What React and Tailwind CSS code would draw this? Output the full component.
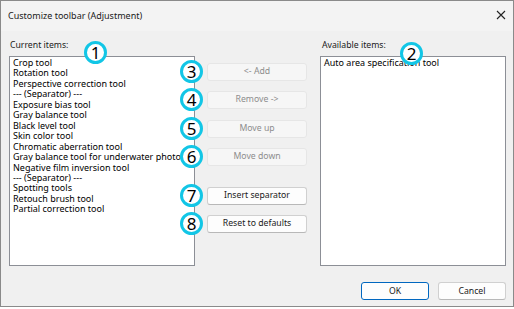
import React from "react";

const currentItems = [
  "Crop tool",
  "Rotation tool",
  "Perspective correction tool",
  "--- (Separator) ---",
  "Exposure bias tool",
  "Gray balance tool",
  "Black level tool",
  "Skin color tool",
  "Chromatic aberration tool",
  "Gray balance tool for underwater photo",
  "Negative film inversion tool",
  "--- (Separator) ---",
  "Spotting tools",
  "Retouch brush tool",
  "Partial correction tool",
];

const Badge = ({ n, className = "" }) => (
  <div
    className={`w-[23px] h-[23px] rounded-full border-[3px] border-[#12c6e6] bg-white flex items-center justify-center text-[17px] leading-none text-black ${className}`}
  >
    <span className="-mt-px">{n}</span>
  </div>
);

const SideButton = ({ n, label, disabled, className = "" }) => (
  <div className={`flex items-center gap-[4px] ${className}`}>
    <Badge n={n} />
    <button
      className={`w-[100px] h-[18px] rounded-[3px] border text-[8.7px] leading-none ${
        disabled
          ? "bg-[#f6f6f6] border-[#e6e6e6] text-[#8d8d8d]"
          : "bg-[#fdfdfd] border-[#d0d0d0] border-b-[#b8b8b8] text-[#1a1a1a]"
      }`}
    >
      {label}
    </button>
  </div>
);

export default function App() {
  return (
    <div
      className="w-[514px] h-[309px] bg-white"
      style={{ fontFamily: '"Noto Sans", "Open Sans", sans-serif' }}
    >
      <div className="w-[514px] h-[307px] border border-[#8a8a8a] bg-[#f0f0f0] flex flex-col">
        <div className="h-[30px] bg-[#f3f3f3] flex items-center justify-between pl-[7px] pr-[6px]">
          <span className="text-[9px] text-[#1a1a1a] -mt-[1px]">
            Customize toolbar (Adjustment)
          </span>
          <svg width="10" height="10" viewBox="0 0 10 10" className="mr-[1px] -mt-[3px]">
            <path d="M1 1 L9 9 M9 1 L1 9" stroke="#222" strokeWidth="1.1" />
          </svg>
        </div>

        <div className="relative flex-1 pl-[8px] pr-[7px] pt-[8px]">
          <div className="flex items-start">
            <div className="flex flex-col w-[186px]">
              <span className="pl-[1px] h-[17px] text-[8.7px] text-[#1a1a1a]">Current items:</span>
              <div className="h-[210px] bg-white border border-[#8c8f96] pl-[3px] pt-[1px]">
                {currentItems.map((t, i) => (
                  <div key={i} className="text-[9px] leading-[10.45px] text-black whitespace-nowrap">
                    {t}
                  </div>
                ))}
              </div>
            </div>

            <div className="flex flex-col ml-[-15px] pt-[21px]">
              <SideButton n={3} label="<- Add" disabled />
              <SideButton n={4} label="Remove ->" disabled className="mt-[5px]" />
              <SideButton n={5} label="Move up" disabled className="mt-[6px]" />
              <SideButton n={6} label="Move down" disabled className="mt-[5px]" />
              <SideButton n={7} label="Insert separator" className="mt-[16px]" />
              <SideButton n={8} label="Reset to defaults" className="mt-[5px]" />
            </div>

            <div className="flex flex-col w-[186px] ml-[13px]">
              <span className="pl-[2px] h-[17px] text-[8.7px] text-[#1a1a1a]">Available items:</span>
              <div className="h-[210px] bg-white border border-[#8c8f96] pl-[3px] pt-[1px]">
                <div className="text-[9px] leading-[10.45px] text-black whitespace-nowrap">
                  Auto area specification tool
                </div>
              </div>
            </div>
          </div>

          <div className="flex justify-end gap-[9px] mt-[16px]">
            <button className="w-[68px] h-[18px] rounded-[3px] border-[1.5px] border-[#0067c0] bg-[#fdfdfd] text-[8.7px] leading-none text-[#1a1a1a]">
              OK
            </button>
            <button className="w-[68px] h-[18px] rounded-[3px] border border-[#d0d0d0] border-b-[#b8b8b8] bg-[#fdfdfd] text-[8.7px] leading-none text-[#1a1a1a]">
              Cancel
            </button>
          </div>

          <Badge n={1} className="absolute left-[83px] top-[10px]" />
          <Badge n={2} className="absolute left-[399px] top-[11px]" />
        </div>
      </div>
    </div>
  );
}
